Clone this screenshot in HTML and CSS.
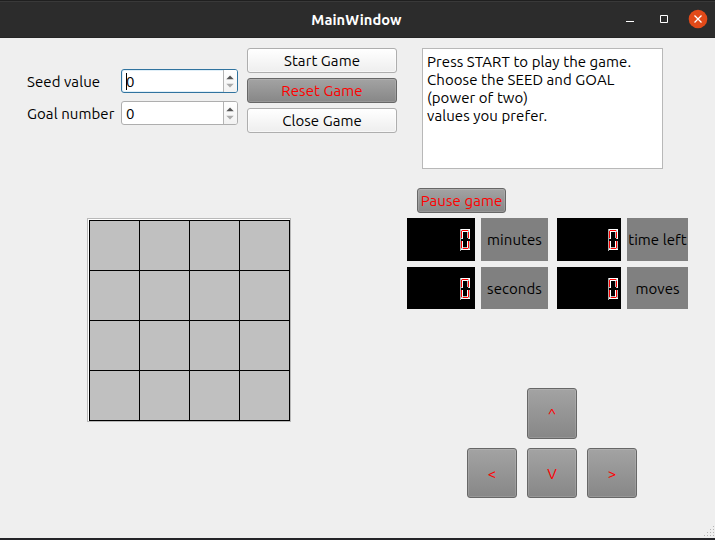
FILE: index.html
```html
<!DOCTYPE html>
<html lang="en">
<head>
<meta charset="utf-8">
<title>MainWindow</title>
<link rel="stylesheet" href="styles.css">
</head>
<body>
<svg class="defs" width="0" height="0" aria-hidden="true">
  <symbol id="zero" viewBox="0 0 10 22">
    <path fill="#aaa" d="M0 0h1v22H0z"/>
    <path fill="#fff" d="M1 0h9v1H1zM9 1h1v9H9zM2 2h1v8H2zM3 2h5v1H3zM2 12h1v7H2zM7 12h1v7H7zM1 20h9v1H1z"/>
    <path fill="#f00" d="M2 1h6v1H2zM1 2h1v7H1zM8 3h1v6H8zM1 12h1v7H1zM8 12h1v7H8zM3 19h5v1H3z"/>
    <path fill="#bbb" d="M7 3h1v6H7zM3 18h4v1H3zM9 12h1v8H9zM1 1h1v1H1zM8 1h1v2H8zM1 19h2v1H1zM8 19h1v1H8zM1 9h1v1H1zM8 9h1v1H8z"/>
  </symbol>
  <symbol id="steps" viewBox="0 0 14 22">
    <path fill="#555" d="M2.500 9 6.500 5l4 4z"/>
    <path fill="#aaa" d="m2.500 14 4 4 4-4z"/>
  </symbol>
</svg>
<header class="titlebar">
  <h1>MainWindow</h1>
  <svg class="controls" width="90" height="38" viewBox="0 0 90 38">
    <path fill="#fff" d="M1 21h8v1H1z"/>
    <path fill="none" stroke="#fff" d="M35.500 15.500h7v7h-7z"/>
    <circle cx="73" cy="19" r="9.300" fill="#e24a19"/>
    <path fill="none" stroke="#fff" stroke-width="1.300" d="m69.500 15.500 7 7m0-7-7 7"/>
  </svg>
</header>
<main>
  <section class="left">
    <div class="setup">
      <div class="form">
        <label><span class="seed">Seed value</span><div class="spin focus"><b>0</b><svg width="14" height="22"><use href="#steps"/></svg></div></label>
        <label><span class="goal">Goal number</span><div class="spin"><b>0</b><svg width="14" height="22"><use href="#steps"/></svg></div></label>
      </div>
      <div class="actions">
        <button>Start Game</button>
        <button class="dark">Reset Game</button>
        <button>Close Game</button>
      </div>
    </div>
    <div class="board"><div class="cells">
      <i></i><i></i><i></i><i></i><i></i><i></i><i></i><i></i><i></i><i></i><i></i><i></i><i></i><i></i><i></i><i></i>
    </div></div>
  </section>
  <section class="right">
    <div class="info"><p>Press START to play the game.</p><p>Choose the SEED and GOAL</p><p>(power of two)</p><p>values you prefer.</p></div>
    <button class="dark pause">Pause game</button>
    <div class="stats">
      <div class="pair"><div class="lcd"><svg width="10" height="22"><use href="#zero"/></svg></div><span>minutes</span>
      <div class="lcd"><svg width="10" height="22"><use href="#zero"/></svg></div><span>seconds</span></div>
      <div class="pair second"><div class="lcd"><svg width="10" height="22"><use href="#zero"/></svg></div><span>time left</span>
      <div class="lcd"><svg width="10" height="22"><use href="#zero"/></svg></div><span>moves</span></div>
    </div>
    <div class="pad">
      <button class="dark up">^</button>
      <button class="dark">&lt;</button><button class="dark">V</button><button class="dark">&gt;</button>
    </div>
  </section>
  <svg class="grip" width="12" height="12" fill="#b4b4b4"><path d="M10 1h1v1h-1zM7 4h1v1H7zM10 4h1v1h-1zM4 7h1v1H4zM7 7h1v1H7zM10 7h1v1h-1zM1 10h1v1H1zM4 10h1v1H4zM7 10h1v1H7zM10 10h1v1h-1z"/></svg>
</main>
</body>
</html>
```
FILE: styles.css
```css
* { box-sizing: border-box; }
body { margin: 0; width: 715px; height: 540px; overflow: hidden; background: #efefef; color: #000; font: 15px/18px "Ubuntu", "Noto Sans", sans-serif; letter-spacing: .07px; display: flex; flex-direction: column; }
svg { display: block; }
.defs { position: absolute; }
.titlebar { height: 38px; flex: none; background: #2c2c2c; border-top: 1px solid #1f1f1f; box-shadow: inset 0 1px #393939, inset 0 -1px #252525; display: grid; grid-template-columns: 1fr auto 1fr; align-items: center; }
h1 { margin: 1px 2px 0 0; grid-column: 2; color: #fff; font-size: 14.67px; font-weight: 700; line-height: 20px; }
.controls { justify-self: end; margin-top: -1px; }
main { position: relative; flex: 1; display: flex; border-bottom: 2px solid #242428; }
.left { width: 407px; flex: none; }
.setup { display: flex; padding: 10px 0 0 27px; }
.form { width: 211px; margin: 21px 9px 0 0; display: flex; flex-direction: column; gap: 8px; }
label { display: flex; justify-content: space-between; align-items: center; height: 24px; white-space: nowrap; }
label span { padding-top: 2px; }
.spin { width: 117px; height: 24px; border: 1px solid #aeaeae; border-radius: 3px; background: #fff; display: flex; justify-content: space-between; overflow: hidden; }
.spin b { font-weight: 400; margin-left: 4px; line-height: 23px; }
.spin svg { border-left: 1px solid #b4b4b4; background: linear-gradient(#fff, #f2f2f2); }
.spin.focus { border-color: #30739f; box-shadow: inset 0 0 0 1px #e0eff8; }
.spin.focus b { box-shadow: inset 1px 0 #000; height: 17px; margin-top: 3px; line-height: 17px; }
.actions { width: 150px; display: flex; flex-direction: column; gap: 5px; }
button { height: 25px; margin: 0; padding: 0; font: inherit; letter-spacing: inherit; line-height: 24px; color: #000; border: 1px solid #aeaeae; border-radius: 3px; background: linear-gradient(#fff, #eee); box-shadow: inset 0 0 0 1px rgba(255,255,255,.5); }
.dark { color: #f00; border-color: #676767; background: linear-gradient(#a3a3a3, #878787); box-shadow: inset 0 0 0 1px rgba(255,255,255,.13); }
.board { width: 204px; height: 204px; margin: 85px 0 0 87px; padding: 1px; border: 1px solid #b8b8b8; background: #fff; }
.cells { width: 201px; height: 201px; display: grid; grid-template: repeat(4, 49px) / repeat(4, 49px); gap: 1px; padding: 1px; background: #000; }
.cells i { background: #c0c0c0; }
.right { flex: 1; display: flex; flex-direction: column; align-items: flex-start; }
.info { width: 241px; height: 121px; margin: 10px 0 0 15px; padding: 4px; background: #fff; border: 1px solid #b8b8b8; white-space: nowrap; }
p { margin: 0; }
.pause { width: 89px; margin: 19px 0 0 10px; white-space: nowrap; }
.stats { display: flex; gap: 9px; margin-top: 5px; }
.pair { display: grid; grid-template: 43px 42px / 68px 67px; gap: 6px; }
.pair.second { grid-template-columns: 64px 61px; }
.pair span { background: #808080; display: flex; align-items: center; justify-content: center; white-space: nowrap; padding-top: 1px; }
.lcd { background: #000; padding: 11px 5px 0 0; }
.lcd svg { margin-left: auto; }
.second .lcd { padding-right: 3px; }
.pad { margin: 79px 0 0 60px; display: grid; grid-template: 51px 50px / repeat(3, 50px); gap: 9px 10px; }
.pad button { height: auto; padding-top: 1px; }
.pad .up { grid-column: 2; }
.up + button { grid-column: 1; }
.grip { position: absolute; right: 0; bottom: 1px; }
```
